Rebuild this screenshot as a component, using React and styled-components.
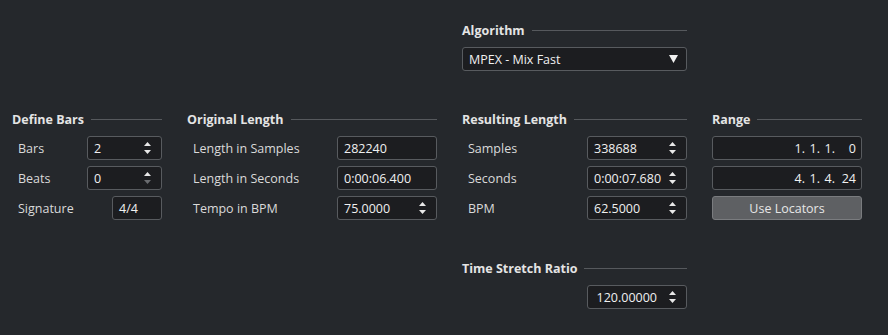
import React from "react";
import styled, { createGlobalStyle } from "styled-components";

const GlobalStyle = createGlobalStyle`
  html, body {
    margin: 0;
    padding: 0;
    background: #25282c;
  }
  body {
    font-family: "Open Sans", "Noto Sans", sans-serif;
    font-size: 12.5px;
    color: #d8d8d8;
  }
`;

const Page = styled.div`
  display: grid;
  grid-template-columns: 150px 250px 225px 150px;
  align-content: start;
  column-gap: 25px;
  row-gap: 38px;
  padding: 20px 0 0 12px;
  width: 888px;
  height: 335px;
  box-sizing: border-box;
`;

const Group = styled.section`
  grid-column: ${(p) => p.$col || "auto"};
  display: flex;
  flex-direction: column;
`;

const Header = styled.div`
  display: flex;
  align-items: center;
  height: 20px;
  margin-bottom: 7px;
  font-weight: 700;
  font-size: 12.5px;
  color: #e4e4e4;

  &::after {
    content: "";
    flex: 1;
    height: 1px;
    margin-left: 7px;
    background: #56595d;
  }
`;

const Rows = styled.div`
  display: flex;
  flex-direction: column;
  gap: 6px;
`;

const Row = styled.div`
  display: flex;
  align-items: center;
  justify-content: ${(p) => (p.$end ? "flex-end" : "space-between")};
  height: 24px;
`;

const Label = styled.span`
  padding-left: 6px;
  color: #dadada;
`;

const Field = styled.div`
  box-sizing: border-box;
  width: ${(p) => p.$w}px;
  height: 24px;
  display: flex;
  align-items: center;
  justify-content: ${(p) => (p.$right ? "flex-end" : "flex-start")};
  padding: 0 ${(p) => (p.$pr != null ? p.$pr : 6)}px 0 6px;
  border: 1px solid #585b5f;
  border-radius: 3px;
  background: #1c1d20;
  color: #f0f0f0;
  font-size: 12.5px;
  white-space: pre;
`;

const Value = styled.span`
  flex: ${(p) => (p.$right ? "0 0 auto" : "1")};
`;

const SpinWrap = styled.span`
  display: flex;
  flex-direction: column;
  gap: 4px;
  margin-left: ${(p) => (p.$gap != null ? p.$gap : 0)}px;
  margin-right: 4px;
`;

const Seg = styled.span`
  display: inline-block;
  width: ${(p) => p.$w}px;
  text-align: right;
`;

const Select = styled(Field)`
  justify-content: space-between;
  padding-right: 8px;
`;

const Button = styled.button`
  box-sizing: border-box;
  width: 150px;
  height: 24px;
  border: 1px solid #7a7c7f;
  border-radius: 3px;
  background: #5e6063;
  color: #e6e6e6;
  font-family: inherit;
  font-size: 12.5px;
  padding: 0;
`;

const Spinner = ({ downDisabled, gap }) => (
  <SpinWrap $gap={gap}>
    <svg width="7" height="4" viewBox="0 0 7 4">
      <path d="M3.5 0 L7 4 L0 4 Z" fill="#e8e8e8" />
    </svg>
    <svg width="7" height="4" viewBox="0 0 7 4">
      <path d="M0 0 L7 0 L3.5 4 Z" fill={downDisabled ? "#6a6c70" : "#e8e8e8"} />
    </svg>
  </SpinWrap>
);

const NumField = ({ w, value, spin, downDisabled }) => (
  <Field $w={w}>
    <Value>{value}</Value>
    {spin && <Spinner downDisabled={downDisabled} />}
  </Field>
);

const PosField = ({ parts }) => (
  <Field $w={150} $right $pr={5}>
    <Seg $w={15}>{parts[0]}</Seg>
    <Seg $w={15}>{parts[1]}</Seg>
    <Seg $w={15}>{parts[2]}</Seg>
    <Seg $w={21}>{parts[3]}</Seg>
  </Field>
);

export default function App() {
  return (
    <>
      <GlobalStyle />
      <Page>
        <Group $col="3">
          <Header>Algorithm</Header>
          <Select $w={225}>
            <span>MPEX - Mix Fast</span>
            <svg width="9" height="8" viewBox="0 0 9 8">
              <path d="M0 0 L9 0 L4.5 8 Z" fill="#f0f0f0" />
            </svg>
          </Select>
        </Group>

        <Group $col="1">
          <Header>Define Bars</Header>
          <Rows>
            <Row>
              <Label>Bars</Label>
              <NumField w={75} value="2" spin />
            </Row>
            <Row>
              <Label>Beats</Label>
              <NumField w={75} value="0" spin downDisabled />
            </Row>
            <Row>
              <Label>Signature</Label>
              <NumField w={50} value="4/4" />
            </Row>
          </Rows>
        </Group>

        <Group>
          <Header>Original Length</Header>
          <Rows>
            <Row>
              <Label>Length in Samples</Label>
              <NumField w={100} value="282240" />
            </Row>
            <Row>
              <Label>Length in Seconds</Label>
              <NumField w={100} value="0:00:06.400" />
            </Row>
            <Row>
              <Label>Tempo in BPM</Label>
              <NumField w={100} value="75.0000" spin />
            </Row>
          </Rows>
        </Group>

        <Group>
          <Header>Resulting Length</Header>
          <Rows>
            <Row>
              <Label>Samples</Label>
              <NumField w={100} value="338688" spin />
            </Row>
            <Row>
              <Label>Seconds</Label>
              <NumField w={100} value="0:00:07.680" spin />
            </Row>
            <Row>
              <Label>BPM</Label>
              <NumField w={100} value="62.5000" spin />
            </Row>
          </Rows>
        </Group>

        <Group>
          <Header>Range</Header>
          <Rows>
            <Row>
              <PosField parts={["1.", "1.", "1.", "0"]} />
            </Row>
            <Row>
              <PosField parts={["4.", "1.", "4.", "24"]} />
            </Row>
            <Row>
              <Button>Use Locators</Button>
            </Row>
          </Rows>
        </Group>

        <Group $col="3">
          <Header>Time Stretch Ratio</Header>
          <Row $end>
            <Field $w={100} $right>
              <Value $right>120.00000</Value>
              <Spinner gap={12} />
            </Field>
          </Row>
        </Group>
      </Page>
    </>
  );
}
